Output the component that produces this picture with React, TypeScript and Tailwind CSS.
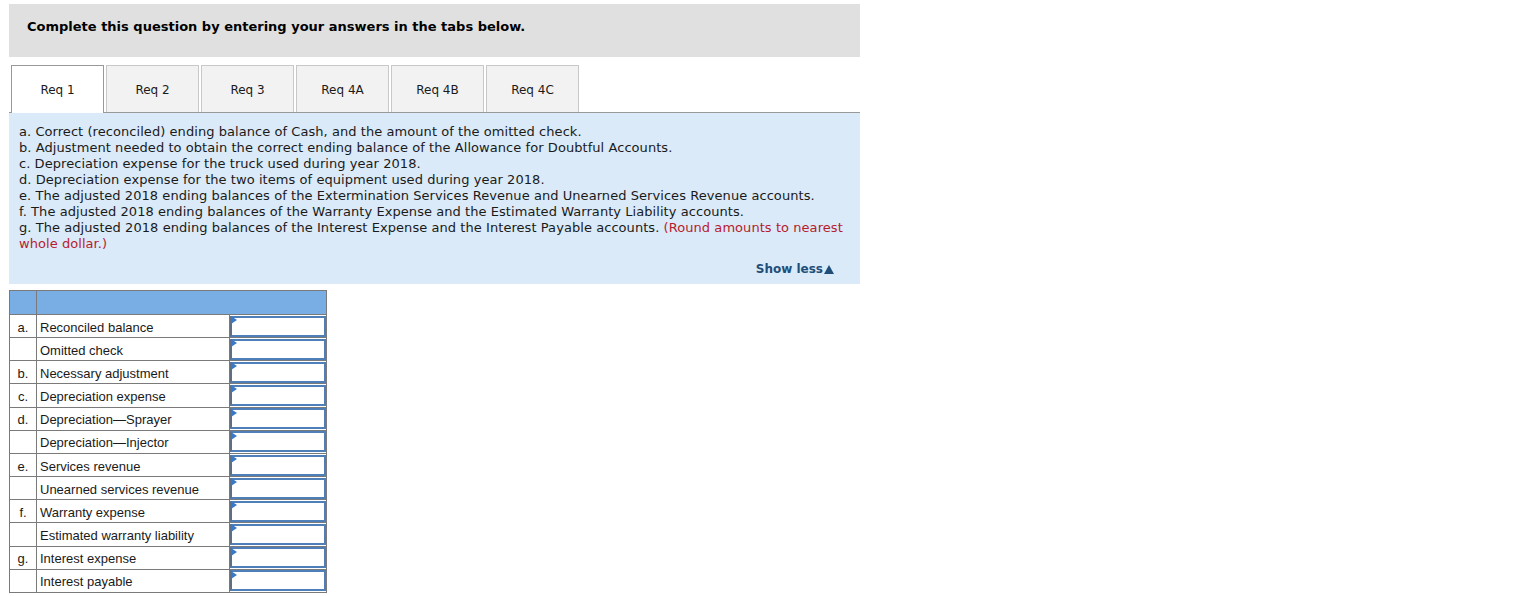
import React from "react";

const tabs = ["Req 1", "Req 2", "Req 3", "Req 4A", "Req 4B", "Req 4C"];

const rows: [string, string][] = [
  ["a.", "Reconciled balance"],
  ["", "Omitted check"],
  ["b.", "Necessary adjustment"],
  ["c.", "Depreciation expense"],
  ["d.", "Depreciation\u2014Sprayer"],
  ["", "Depreciation\u2014Injector"],
  ["e.", "Services revenue"],
  ["", "Unearned services revenue"],
  ["f.", "Warranty expense"],
  ["", "Estimated warranty liability"],
  ["g.", "Interest expense"],
  ["", "Interest payable"],
];

const lines = [
  "a. Correct (reconciled) ending balance of Cash, and the amount of the omitted check.",
  "b. Adjustment needed to obtain the correct ending balance of the Allowance for Doubtful Accounts.",
  "c. Depreciation expense for the truck used during year 2018.",
  "d. Depreciation expense for the two items of equipment used during year 2018.",
  "e. The adjusted 2018 ending balances of the Extermination Services Revenue and Unearned Services Revenue accounts.",
  "f. The adjusted 2018 ending balances of the Warranty Expense and the Estimated Warranty Liability accounts.",
];

export default function App() {
  return (
    <div className="w-[1525px] h-[596px] bg-white pt-[4px] pl-[9px] text-[#1a1a1a] overflow-hidden">
      <div className="w-[851px] font-['Verdana','DejaVu_Sans',sans-serif]">
        <div className="h-[53px] bg-[#e0e0e0] pl-[18px] pt-[15px] text-[13px] font-bold leading-[16px] text-black">
          Complete this question by entering your answers in the tabs below.
        </div>
        <div className="mt-[8px] flex gap-[2px] pl-[2px] border-b border-[#999999] h-[48px]">
          {tabs.map((t, i) => (
            <div
              key={t}
              className={
                i === 0
                  ? "w-[93px] h-[48px] -mb-px bg-white border border-b-0 border-[#999999] flex items-center justify-center text-[12px] pt-[1px]"
                  : "w-[93px] h-[47px] bg-[#f2f2f2] border border-b-0 border-[#c8c8c8] flex items-center justify-center text-[12px] pt-[1px]"
              }
            >
              {t}
            </div>
          ))}
        </div>
        <div className="h-[171px] bg-[#daeaf8] pl-[10px] pt-[11px] text-[13px] leading-[16px] tracking-[0.06px] relative">
          {lines.map((l) => (
            <div key={l} className="whitespace-nowrap">{l}</div>
          ))}
          <div className="whitespace-nowrap">
            g. The adjusted 2018 ending balances of the Interest Expense and the Interest Payable accounts.{" "}
            <span className="text-[#b71c2c]">(Round amounts to nearest</span>
          </div>
          <div className="text-[#b71c2c]">whole dollar.)</div>
          <div className="absolute right-[26px] top-[148px] text-[12px] font-bold text-[#1f4e79] flex items-center tracking-normal">
            Show less
            <svg className="ml-[1px]" width="10" height="9" viewBox="0 0 10 9">
              <polygon points="5,0 10,9 0,9" fill="#1f4e79" />
            </svg>
          </div>
        </div>
      </div>
      <table className="mt-[6px] border-collapse font-['Liberation_Sans',Arial,sans-serif] text-[13px] text-[#1a1a1a]">
        <thead>
          <tr className="h-[24px] bg-[#78aee4]">
            <th className="w-[27px] border border-[#7a7a7a] p-0"></th>
            <th colSpan={2} className="border border-[#7a7a7a] p-0"></th>
          </tr>
        </thead>
        <tbody>
          {rows.map(([k, label], i) => (
            <tr key={i} className="h-[23.17px]">
              <td className="w-[27px] border border-[#7a7a7a] text-center p-0 leading-[21px]">
                <span className="relative top-[1px]">{k}</span>
              </td>
              <td className="w-[193px] border border-[#7a7a7a] pl-[3px] p-0 leading-[21px] whitespace-nowrap">
                <span className="relative top-[1px]">{label}</span>
              </td>
              <td className="w-[97px] border border-[#7a7a7a] p-0 relative">
                <div className="h-[21px] border-2 border-[#4f7fb8] border-l-[#5f6f80] bg-white"></div>
                <svg className="absolute left-[1px] top-[1px]" width="6" height="8" viewBox="0 0 6 8">
                  <polygon points="0,0 6,4 0,8" fill="#3a78c8" />
                </svg>
              </td>
            </tr>
          ))}
        </tbody>
      </table>
    </div>
  );
}
